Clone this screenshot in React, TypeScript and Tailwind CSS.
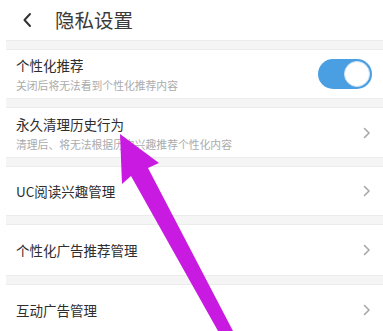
import React from "react";

const Chevron = () => (
  <svg width="8" height="12" viewBox="0 0 8 12" className="shrink-0">
    <path d="M1.5 1.5 L6 6 L1.5 10.5" fill="none" stroke="#a8a8a8" strokeWidth="1.6" strokeLinecap="round" strokeLinejoin="round" />
  </svg>
);

const Band = () => <div className="h-[10px] bg-[#f5f5f5] border-t border-b border-[#ececec]" />;

const Row = ({ title, sub, h, right }: { title: string; sub?: string; h: string; right?: React.ReactNode }) => (
  <div className={`flex items-center justify-between pl-[10px] pr-[12px] bg-white ${h}`}>
    <div className="flex flex-col">
      <div className="text-[13.5px] text-[#2e2e2e] leading-[18px]">{title}</div>
      {sub && <div className="text-[10.8px] text-[#ababab] leading-[14px] mt-[4px]">{sub}</div>}
    </div>
    {right ?? <Chevron />}
  </div>
);

export default function App() {
  return (
    <div className="relative w-[383px] h-[331px] overflow-hidden bg-white" style={{ fontFamily: '"Noto Sans CJK SC", "Noto Sans", sans-serif' }}>
      <div className="h-[40px] flex items-center pl-[22px]">
        <svg width="10" height="16" viewBox="0 0 10 16">
          <path d="M8 2 L2.5 8 L8 14" fill="none" stroke="#333" strokeWidth="2" strokeLinecap="round" strokeLinejoin="round" />
        </svg>
        <div className="ml-[23px] text-[19.5px] text-[#3a3a3a] leading-none">隐私设置</div>
      </div>
      <div className="pl-[6px]">
        <Band />
        <Row
          title="个性化推荐"
          sub="关闭后将无法看到个性化推荐内容"
          h="h-[48px]"
          right={
            <div className="w-[54px] h-[30px] rounded-full bg-[#4a9fe2] flex items-center justify-end pr-[2px] -mr-[1px]">
              <div className="w-[26px] h-[26px] rounded-full bg-white border border-[#cfe3f3]" />
            </div>
          }
        />
        <Band />
        <Row title="永久清理历史行为" sub="清理后、将无法根据历史兴趣推荐个性化内容" h="h-[49px]" />
        <Band />
        <Row title="UC阅读兴趣管理" h="h-[48px]" />
        <Band />
        <Row title="个性化广告推荐管理" h="h-[50px]" />
        <Band />
        <Row title="互动广告管理" h="h-[50px]" />
      </div>
      <svg className="absolute left-0 top-0 pointer-events-none" width="383" height="331" viewBox="0 0 383 331">
        <polygon points="120,134 159,163 148,168 233,331 218,331 131,176 122,184" fill="#c81ae0" />
      </svg>
    </div>
  );
}
